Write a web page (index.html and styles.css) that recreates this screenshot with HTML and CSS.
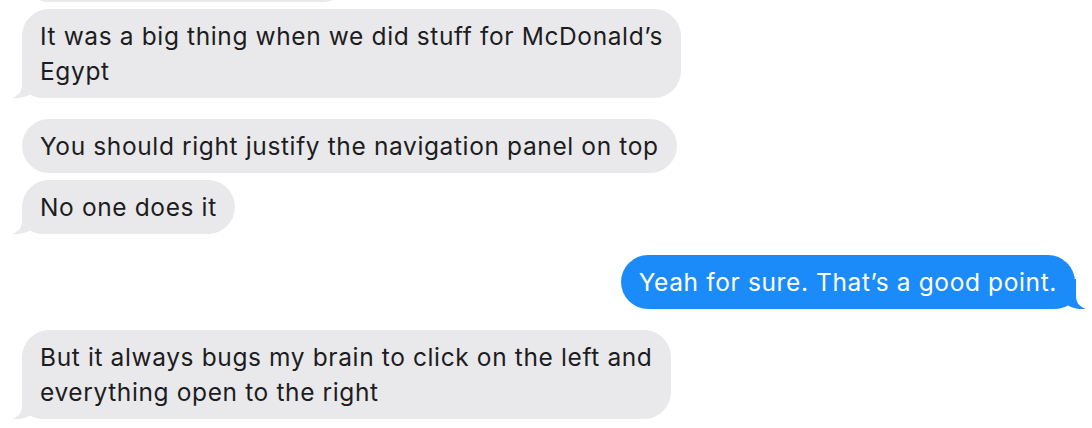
FILE: index.html
```html
<!DOCTYPE html>
<html lang="en">
<head>
<meta charset="utf-8">
<title>Messages</title>
<link rel="stylesheet" href="styles.css">
</head>
<body>
<div class="thread">
  <div class="bubble in hidden-top"></div>

  <div class="bubble in tail"><svg class="tail-l" width="40" height="30" viewBox="0 0 40 30"><path d="M10 0 L10 17 C10 24 6 28 0 30 C6 30.6 13 29.6 18 26.6 C22 28.6 26 30 32 30 L40 30 L40 0 Z"/></svg><span class="t">It was a big thing when we did stuff for McDonald’s<br>Egypt</span></div>

  <div class="bubble in group-start"><span class="t">You should right justify the navigation panel on top</span></div>
  <div class="bubble in tail"><svg class="tail-l" width="40" height="30" viewBox="0 0 40 30"><path d="M10 0 L10 17 C10 24 6 28 0 30 C6 30.6 13 29.6 18 26.6 C22 28.6 26 30 32 30 L40 30 L40 0 Z"/></svg><span class="t">No one does it</span></div>

  <div class="bubble out tail group-start"><svg class="tail-r" width="40" height="30" viewBox="0 0 40 30"><path d="M30 0 L30 17 C30 24 34 28 40 30 C34 30.6 27 29.6 22 26.6 C18 28.6 14 30 8 30 L0 30 L0 0 Z"/></svg><span class="t">Yeah for sure. That’s a good point.</span></div>

  <div class="bubble in tail group-start"><svg class="tail-l" width="40" height="30" viewBox="0 0 40 30"><path d="M10 0 L10 17 C10 24 6 28 0 30 C6 30.6 13 29.6 18 26.6 C22 28.6 26 30 32 30 L40 30 L40 0 Z"/></svg><span class="t">But it always bugs my brain to click on the left and<br>everything open to the right</span></div>
</div>
</body>
</html>
```

FILE: styles.css
```css
html, body {
  margin: 0;
  padding: 0;
  background: #ffffff;
}

body {
  width: 1092px;
  height: 428px;
  overflow: hidden;
  font-family: Inter, "Noto Sans", "Liberation Sans", sans-serif;
}

.thread {
  display: flex;
  flex-direction: column;
  padding: 0 17px 0 22px;
  gap: 7px;
}

.bubble {
  position: relative;
  width: fit-content;
  white-space: nowrap;
  font-size: 24.5px;
  line-height: 35px;
  padding: 9.5px 18px;
  border-radius: 27px;
  letter-spacing: 0.62px;
}

.t {
  position: relative;
  z-index: 1;
}

.bubble.in {
  align-self: flex-start;
  background: #e9e9eb;
  color: #1d1d1f;
}

.bubble.out {
  align-self: flex-end;
  background: #1b8bfa;
  color: #ffffff;
}

.hidden-top {
  margin-top: -52px;
  width: 292px;
  height: 35px;
}

.group-start {
  margin-top: 14px;
}

.tail-l, .tail-r {
  position: absolute;
  bottom: 0;
  z-index: 0;
}

.tail-l {
  left: -10px;
  fill: #e9e9eb;
}

.tail-r {
  right: -11px;
  fill: #1b8bfa;
}
```
